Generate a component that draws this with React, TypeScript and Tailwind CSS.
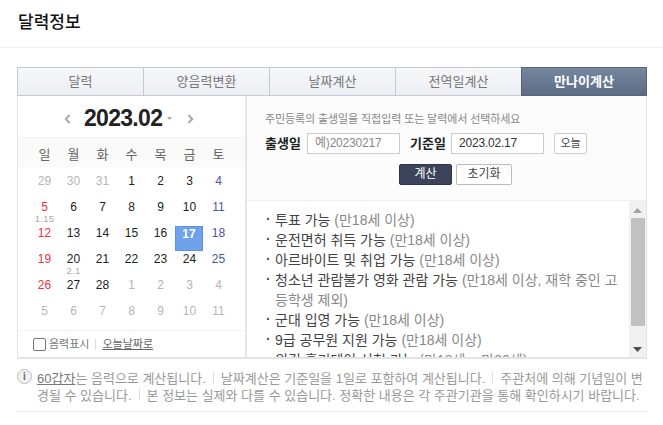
const FONT = "font-['Liberation_Sans','Noto_Sans_CJK_KR',sans-serif]";

const TABS = ["달력", "양음력변환", "날짜계산", "전역일계산", "만나이계산"];
const WEEK = ["일", "월", "화", "수", "목", "금", "토"];

type Day = { d: number; tone: string; lunar?: string; selected?: boolean };

const MUTED = "text-[#b5b5b5]";
const INK = "text-[#222]";
const SUN = "text-[#f0303f]";
const SAT = "text-[#4a55a8]";

const rows: Day[][] = [
  [
    { d: 29, tone: MUTED },
    { d: 30, tone: MUTED },
    { d: 31, tone: MUTED },
    { d: 1, tone: INK },
    { d: 2, tone: INK },
    { d: 3, tone: INK },
    { d: 4, tone: SAT },
  ],
  [
    { d: 5, tone: SUN },
    { d: 6, tone: INK },
    { d: 7, tone: INK },
    { d: 8, tone: INK },
    { d: 9, tone: INK },
    { d: 10, tone: INK },
    { d: 11, tone: SAT },
  ],
  [
    { d: 12, tone: SUN, lunar: "1.15" },
    { d: 13, tone: INK },
    { d: 14, tone: INK },
    { d: 15, tone: INK },
    { d: 16, tone: INK },
    { d: 17, tone: "text-white", selected: true },
    { d: 18, tone: SAT },
  ],
  [
    { d: 19, tone: SUN },
    { d: 20, tone: INK },
    { d: 21, tone: INK },
    { d: 22, tone: INK },
    { d: 23, tone: INK },
    { d: 24, tone: INK },
    { d: 25, tone: SAT },
  ],
  [
    { d: 26, tone: SUN },
    { d: 27, tone: INK, lunar: "2.1" },
    { d: 28, tone: INK },
    { d: 1, tone: MUTED },
    { d: 2, tone: MUTED },
    { d: 3, tone: MUTED },
    { d: 4, tone: MUTED },
  ],
  [
    { d: 5, tone: MUTED },
    { d: 6, tone: MUTED },
    { d: 7, tone: MUTED },
    { d: 8, tone: MUTED },
    { d: 9, tone: MUTED },
    { d: 10, tone: MUTED },
    { d: 11, tone: MUTED },
  ],
];

const RESULTS: [string, string][] = [
  ["투표 가능", "(만18세 이상)"],
  ["운전면허 취득 가능", "(만18세 이상)"],
  ["아르바이트 및 취업 가능", "(만18세 이상)"],
  ["청소년 관람불가 영화 관람 가능", "(만18세 이상, 재학 중인 고등학생 제외)"],
  ["군대 입영 가능", "(만18세 이상)"],
  ["9급 공무원 지원 가능", "(만18세 이상)"],
  ["워킹 홀리데이 신청 가능", "(만18세 ~ 만30세)"],
];

function Calendar() {
  return (
    <div className="w-[227px] shrink-0 flex flex-col bg-white">
      <div className="h-[42px] shrink-0 flex items-center pl-[46px] pt-[4px] border-b border-[#f3f3f3]">
        <svg width="7" height="10" viewBox="0 0 7 10" className="mr-[13px]">
          <path d="M5.5 1 L1.8 5 L5.5 9" fill="none" stroke="#aaa" strokeWidth="2" />
        </svg>
        <span className="text-[23px] leading-none font-bold tracking-[-0.7px] text-[#222]">2023.02</span>
        <svg width="5" height="3" viewBox="0 0 5 3" className="ml-[5px] mr-[15px]">
          <path d="M0 0 H5 L2.5 3 Z" fill="#aaa" />
        </svg>
        <svg width="7" height="10" viewBox="0 0 7 10">
          <path d="M1.5 1 L5.2 5 L1.5 9" fill="none" stroke="#aaa" strokeWidth="2" />
        </svg>
      </div>
      <div className="h-[29px] shrink-0 bg-[#fafafa] flex pl-[12px] pt-[5px] items-center">
        {WEEK.map((w) => (
          <span key={w} className="w-[29px] text-center text-[13px] text-[#666]">
            {w}
          </span>
        ))}
      </div>
      <div className="flex flex-col pl-[12px] pt-[7px]">
        {rows.map((row, i) => (
          <div key={i} className="flex h-[26px]">
            {row.map((c, j) => (
              <div
                key={j}
                className={`relative flex justify-center text-[12px] leading-[14px] ${c.tone} ${
                  c.selected
                    ? "w-[28px] mr-px h-[25px] bg-[#6ea2ec] border border-[#5c94e4] font-bold"
                    : "w-[29px] h-[26px]"
                }`}
              >
                {c.lunar && (
                  <span className="absolute left-0 right-0 top-[-12px] text-center text-[9.5px] leading-[10px] tracking-[0.3px] text-[#aaa]">
                    {c.lunar}
                  </span>
                )}
                {c.d}
              </div>
            ))}
          </div>
        ))}
      </div>
      <div className="mt-auto h-[27px] shrink-0 border-t border-[#f3f3f3] flex items-center pl-[15px] text-[11px] text-[#777]">
        <span className="w-[13px] h-[13px] rounded-[2px] border border-[#777] bg-white mr-[3px]" />
        <span>음력표시</span>
        <span className="w-px h-[11px] bg-[#ddd] mx-[6px]" />
        <span className="underline text-[#666]">오늘날짜로</span>
      </div>
    </div>
  );
}

function AgeForm() {
  return (
    <div className="h-[105px] shrink-0 bg-[#fcfcfc] border-b border-[#eee] pl-[18px] pt-[16px]">
      <p className="text-[11px] leading-[14px] tracking-[-0.1px] text-[#888]">
        주민등록의 출생일을 직접입력 또는 달력에서 선택하세요
      </p>
      <div className="flex items-center mt-[7px] h-[21px]">
        <span className="w-[35px] text-[13px] font-bold whitespace-nowrap text-[#222] mr-[7px]">출생일</span>
        <span className="w-[93px] h-[21px] border border-[#ccc] bg-white text-[12px] leading-[19px] tracking-[-0.2px] pl-[7px] text-[#888]">
          예)20230217
        </span>
        <span className="w-[35px] text-[13px] font-bold whitespace-nowrap text-[#222] ml-[10px] mr-[6px]">기준일</span>
        <span className="w-[93px] h-[21px] border border-[#ccc] bg-white text-[12px] leading-[19px] tracking-[-0.2px] pl-[7px] text-[#333]">
          2023.02.17
        </span>
        <span className="ml-[10px] w-[33px] h-[21px] rounded-[2px] border border-[#ccc] bg-white text-center text-[11px] leading-[19px] text-[#444]">
          오늘
        </span>
      </div>
      <div className="flex gap-[4px] mt-[10px] ml-[134px]">
        <span className="w-[53px] h-[21px] rounded-[2px] border border-[#2f364c] bg-[#3c435a] text-center text-[12px] leading-[19px] text-white">
          계산
        </span>
        <span className="w-[56px] h-[21px] rounded-[2px] border border-[#bbb] bg-white text-center text-[12px] leading-[19px] text-[#444]">
          초기화
        </span>
      </div>
    </div>
  );
}

function ResultList() {
  return (
    <div className="flex-1 min-h-0 overflow-hidden bg-white flex">
      <ul className="flex-1 min-w-0 pt-[9px] pl-[19px] pr-[4px] text-[14px] leading-[20px] text-[#444]">
        {RESULTS.map(([a, b]) => (
          <li key={a} className="relative pl-[9px]">
            <span className="absolute left-0 top-[-1px] font-bold text-[#555]">·</span>
            {a} <span className="text-[#888]">{b}</span>
          </li>
        ))}
      </ul>
      <div className="w-[17px] shrink-0 bg-[#f1f1f1] flex flex-col items-center">
        <svg width="9" height="5" viewBox="0 0 9 5" className="mt-[7px] shrink-0">
          <path d="M4.5 0 L9 5 H0 Z" fill="#a3a3a3" />
        </svg>
        <div className="w-[14px] h-[108px] mt-[5px] shrink-0 bg-[#c1c1c1]" />
        <svg width="9" height="5" viewBox="0 0 9 5" className="mt-[21px] shrink-0">
          <path d="M0 0 H9 L4.5 5 Z" fill="#505050" />
        </svg>
      </div>
    </div>
  );
}

export default function App() {
  return (
    <div className={`${FONT} w-[663px] h-[425px] overflow-hidden bg-white`}>
      <div className="h-[48px] border-b border-[#f0f0f0] pl-[18px] pt-[12px] text-[17px] leading-[22px] text-[#111] font-medium">
        달력정보
      </div>
      <div className="mx-[17px] mt-[19px] w-[630px]">
        <div className="flex h-[29px]">
          {TABS.map((t, i) => (
            <div
              key={t}
              className={
                i === 4
                  ? "w-[126px] flex items-center justify-center text-[13px] font-bold text-white bg-gradient-to-b from-[#76889f] to-[#5b6c84] border border-[#566578]"
                  : "w-[126px] flex items-center justify-center text-[13px] text-[#777] bg-gradient-to-b from-[#f6f7f9] to-[#eceff3] border-y border-l border-[#c5cad2]"
              }
            >
              {t}
            </div>
          ))}
        </div>
        <div className="flex h-[263px] border-x border-b-2 border-[#e4e4e4]">
          <Calendar />
          <div className="w-[2px] shrink-0 bg-[#e6e6e6]" />
          <div className="flex-1 min-w-0 flex flex-col">
            <AgeForm />
            <ResultList />
          </div>
        </div>
        <div className="relative pl-[20px] pt-[11px] text-[13px] leading-[17px] text-[#999] h-[53px] border-b border-[#eee]">
          <span className="absolute left-0 top-[10px] w-[15px] h-[15px] rounded-full border border-[#bbb] bg-[#f1f1f1] text-center text-[10px] leading-[13px] font-bold text-[#666]">
            i
          </span>
          <span className="underline text-[#777]">60갑자</span>는 음력으로 계산됩니다.
          <span className="inline-block w-px h-[11px] bg-[#ddd] mx-[7px]" />
          날짜계산은 기준일을 1일로 포함하여 계산됩니다.
          <span className="inline-block w-px h-[11px] bg-[#ddd] mx-[7px]" />
          주관처에 의해 기념일이 변경될 수 있습니다.
          <span className="inline-block w-px h-[11px] bg-[#ddd] mx-[7px]" />
          본 정보는 실제와 다를 수 있습니다. 정확한 내용은 각 주관기관을 통해 확인하시기 바랍니다.
        </div>
        <div className="pt-[11px] text-[13px] leading-[18px] whitespace-nowrap text-[#888]">
          <span className="font-bold text-[#111] mr-[36px]">관련정보</span>
          양력 음력 변환 <span className="text-[#1a3dc1]">계산</span> 주말 공휴일 달력 <span className="text-[#1a3dc1]">보기</span> 기념일 <span className="text-[#1a3dc1]">안내 바로가기</span> 안내
        </div>
      </div>
    </div>
  );
}
